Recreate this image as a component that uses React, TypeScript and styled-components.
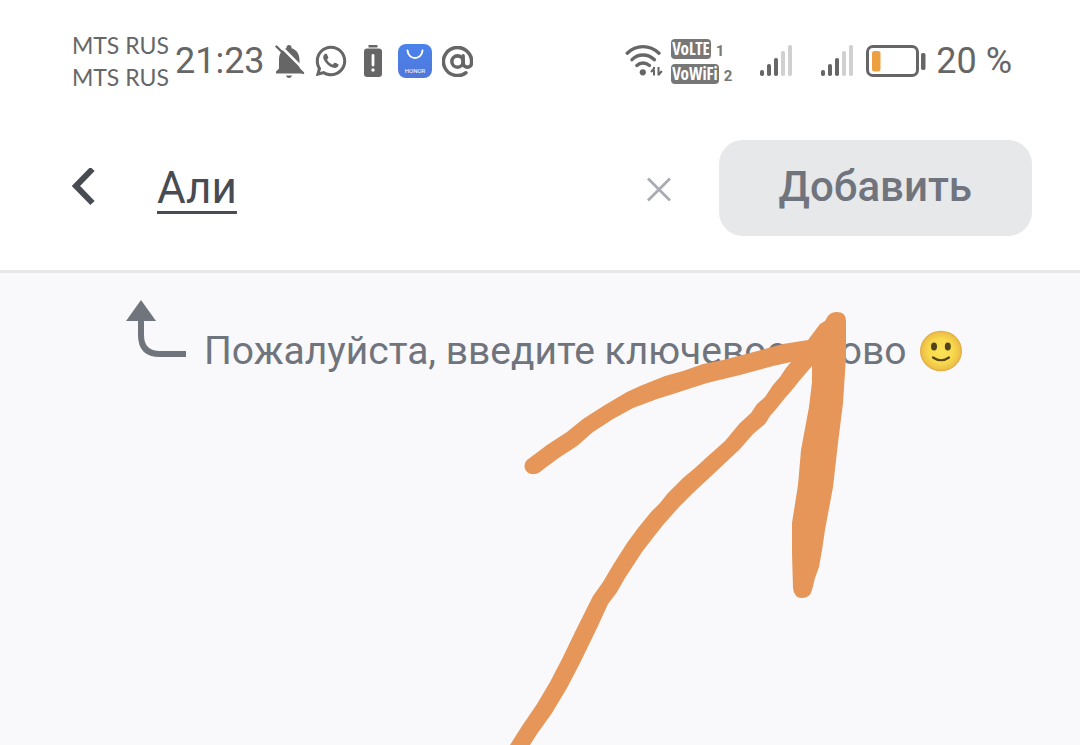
import React, { useState } from "react";
import styled, { createGlobalStyle } from "styled-components";
import { RiWhatsappLine } from "react-icons/ri";
import { AtSign } from "lucide-react";

const GlobalStyle = createGlobalStyle`
  *, *::before, *::after { box-sizing: border-box; }
  body {
    margin: 0;
    background: #f9f9fb;
    font-family: Roboto, "Noto Sans", sans-serif;
  }
`;

const Page = styled.div`
  min-height: 100vh;
  display: flex;
  flex-direction: column;
`;

const Header = styled.header`
  background: #ffffff;
  border-bottom: 3px solid #e6e7e9;
`;

const StatusBar = styled.div`
  display: flex;
  justify-content: space-between;
  align-items: center;
  height: 122px;
  padding: 0 68px 0 72px;
  color: #666666;
`;

const StatusGroup = styled.div<{ $gap: number }>`
  display: flex;
  align-items: center;
  gap: ${(p) => p.$gap}px;

  svg { display: block; flex: none; }
`;

const Carriers = styled.div`
  font: 400 23px/32px Lato, sans-serif;
  white-space: nowrap;
`;

const StatusText = styled.span`
  font-size: 36px;
  line-height: 40px;
  white-space: nowrap;
`;

const CallModes = styled.div`
  display: flex;
  flex-direction: column;
  gap: 5px;
`;

const CallMode = styled.div`
  display: flex;
  align-items: flex-end;
  gap: 5px;
  color: #777777;
  font: 700 15px/16px Roboto, sans-serif;
`;

const Badge = styled.span`
  padding: 0 1px;
  border-radius: 4px;
  background: #777777;
  color: #ffffff;
  font: 700 17px/20px "Liberation Sans Narrow", "Open Sans Condensed", sans-serif;
`;

const Toolbar = styled.form`
  display: flex;
  align-items: center;
  padding: 18px 48px 34px 72px;
`;

const IconButton = styled.button`
  display: flex;
  flex: none;
  padding: 0;
  border: 0;
  background: none;
  cursor: pointer;
`;

const KeywordInput = styled.input`
  flex: 1;
  min-width: 0;
  height: 64px;
  margin: 0 24px 0 61px;
  padding: 0;
  border: 0;
  outline: 0;
  background: transparent;
  color: #484b51;
  font: 400 44px/64px Roboto, "Noto Sans", sans-serif;
  text-decoration: underline;
  text-decoration-thickness: 3px;
  text-underline-offset: 8px;
  text-decoration-skip-ink: none;
`;

const AddButton = styled.button`
  flex: none;
  height: 96px;
  margin-left: 48px;
  padding: 0 60px 2px;
  border: 0;
  border-radius: 24px;
  background: #e7e8ea;
  color: #70747c;
  font: 500 42px/48px Roboto, "Noto Sans", sans-serif;
  cursor: pointer;
`;

const Content = styled.main`
  position: relative;
  flex: 1;
  overflow: hidden;
  padding: 27px 48px 27px 126px;
`;

const Hint = styled.div`
  display: flex;
  align-items: flex-start;
  gap: 18px;

  svg { flex: none; }
`;

const HintText = styled.p`
  display: flex;
  align-items: center;
  gap: 12px;
  margin: 0;
  padding-top: 21px;
  color: #70747c;
  font-size: 39px;
  line-height: 60px;
  white-space: nowrap;
`;

const Scribble = styled.svg`
  position: absolute;
  top: 27px;
  left: 500px;
  pointer-events: none;
`;

const BellOff = () => (
  <svg width="30" height="34" viewBox="274 44 30 34" aria-hidden="true">
    <path
      d="M275 73.500V71.500L278 68.500V60C278 53.500 281 49.500 285.500 48.300V47.500Q285.500 45 288 45Q290.500 45 290.500 47.500V48.300C295 49.500 298.500 53.500 298.500 60V68.500L301 71.500V73.500Z"
      fill="#666"
    />
    <path d="M285 75.500h6q-.6 2.500-3 2.500t-3-2.500z" fill="#666" />
    <path d="M277.500 44L304 70.500" stroke="#fff" strokeWidth="2.600" />
    <path d="M275.500 46.500L302 73" stroke="#666" strokeWidth="2.400" strokeLinecap="round" />
  </svg>
);

const BatteryAlert = () => (
  <svg width="31" height="34" viewBox="356 44 31 34" aria-hidden="true">
    <rect x="367.500" y="45" width="9" height="2.600" rx=".6" fill="#666" />
    <rect x="363" y="48.500" width="18" height="28.500" rx="3.200" fill="#666" />
    <path d="M372 55.500v9.500" stroke="#fff" strokeWidth="2.800" strokeLinecap="round" />
    <circle cx="372" cy="70" r="1.700" fill="#fff" />
  </svg>
);

const HonorStore = () => (
  <svg width="34" height="34" viewBox="0 0 34 34" aria-hidden="true">
    <defs>
      <linearGradient id="store" x1="0" y1="0" x2="0" y2="1">
        <stop offset="0" stopColor="#4a83ea" />
        <stop offset="1" stopColor="#5077dc" />
      </linearGradient>
    </defs>
    <rect width="34" height="34" rx="8" fill="url(#store)" />
    <path d="M9.500 6.500C10.500 16.500 23.500 16.500 24.500 6.500" fill="none" stroke="#fff" strokeWidth="2" strokeLinecap="round" />
    <text x="17" y="28.500" fill="#fff" fontFamily="Roboto" fontWeight="400" fontSize="6" textAnchor="middle">
      HONOR
    </text>
  </svg>
);

const Wifi = () => (
  <svg width="38" height="34" viewBox="626 44 38 34" aria-hidden="true">
    <g fill="none" stroke="#666" strokeWidth="3.300" strokeLinecap="round">
      <path d="M628.200 53.200Q635 46.700 644 46.700T660 53.200" />
      <path d="M633 59.700Q637.500 55 644 55T655.500 59.700" />
      <path d="M637.800 65.500Q640.500 63 644 63T650.500 65.500" />
    </g>
    <circle cx="643.800" cy="72.300" r="3.100" fill="#666" />
    <path d="M655 67V75.500M652 72L655.500 68M659.500 67V75.500M659.500 75L662.800 71" fill="none" stroke="#666" strokeWidth="2" />
  </svg>
);

const BARS = [6, 12, 18, 25, 31];

const Signal = () => (
  <svg width="34" height="32" viewBox="0 0 34 32" role="img" aria-label="Сигнал">
    {BARS.map((h, i) => (
      <rect key={h} x={i * 7 + 1} y={31 - h} width="4" height={h} rx="1.800" fill={i < 3 ? "#666" : "#d0d0d0"} />
    ))}
  </svg>
);

const Battery = () => (
  <svg width="60" height="32" viewBox="0 0 60 32" aria-hidden="true">
    <rect x="1.500" y="1.500" width="50" height="29" rx="5.500" fill="none" stroke="#666" strokeWidth="3" />
    <rect x="6" y="6" width="8.500" height="20.500" rx="2.500" fill="#eda03f" />
    <rect x="55" y="8" width="4.500" height="17" rx="1.800" fill="#666" />
  </svg>
);

const Smile = () => (
  <svg width="44" height="44" viewBox="-22 -22 44 44" role="img" aria-label="Улыбка">
    <defs>
      <radialGradient id="face">
        <stop offset="0" stopColor="#fbe355" />
        <stop offset=".6" stopColor="#f8d94d" />
        <stop offset=".9" stopColor="#eec148" />
        <stop offset="1" stopColor="#dda63f" />
      </radialGradient>
    </defs>
    <ellipse rx="21" ry="20.300" fill="url(#face)" />
    <ellipse cx="-7" cy="-4.500" rx="3" ry="3.900" fill="#53421a" />
    <ellipse cx="6.800" cy="-4.500" rx="3" ry="3.900" fill="#53421a" />
    <path d="M-8 6.500Q0 12 8 6.500" fill="none" stroke="#53421a" strokeWidth="2.200" strokeLinecap="round" />
  </svg>
);

const ARROW =
  "M527 460L547 445L567 432L583 419Q604 405 627 392L640 386L665 376L683 371L703 364L723 360L750 353L783 344L808 340L820 324L825 321L828 316Q831 312 837 312Q846 312 846 321V357L843 403L838 443L833 487L825 530L822 550L819 567L815 578L812 590Q810 598 802 598Q794 598 793 588L792 553V523L798 485L801 450L809 407L812 382V366L800 380L792 390L785 398L777 408L770 416L765 424L753 434L740 449L723 465L708 479L693 493L679 507L663 525L652 539L642 552L625 578L617 592L608 604L597 628L580 663L567 688L552 713L537 734L530 745H510L522 726L537 704L550 682L563 657L575 632L593 596L603 582L613 565L627 543L638 528L651 512L660 503L668 493L683 478L695 468L707 457L725 441L740 423L751 413L757 404L765 397L773 385L780 377L786 368L791 362L773 366L740 375L707 383L673 394L657 399L633 408L613 419L593 432L577 446L560 457L545 468L540 472C529 479 520 468 527 460Z";

export default function App() {
  const [keyword, setKeyword] = useState("Али");

  return (
    <Page>
      <GlobalStyle />
      <Header>
        <StatusBar>
          <StatusGroup $gap={6}>
            <Carriers>
              <div>MTS RUS</div>
              <div>MTS RUS</div>
            </Carriers>
            <StatusGroup $gap={10}>
              <StatusText>21:23</StatusText>
              <BellOff />
              <RiWhatsappLine size={32} viewBox="1.5 1.5 21 21" />
              <BatteryAlert />
              <HonorStore />
              <AtSign size={31} viewBox="1 1 22 22" strokeWidth={2.5} />
            </StatusGroup>
          </StatusGroup>
          <StatusGroup $gap={27}>
            <StatusGroup $gap={8}>
              <Wifi />
              <CallModes>
                <CallMode>
                  <Badge>VoLTE</Badge>1
                </CallMode>
                <CallMode>
                  <Badge>VoWiFi</Badge>2
                </CallMode>
              </CallModes>
            </StatusGroup>
            <Signal />
            <StatusGroup $gap={12}>
              <Signal />
              <StatusGroup $gap={10}>
                <Battery />
                <StatusText>20 %</StatusText>
              </StatusGroup>
            </StatusGroup>
          </StatusGroup>
        </StatusBar>
        <Toolbar onSubmit={(e) => e.preventDefault()}>
          <IconButton type="button" aria-label="Назад">
            <svg width="24" height="40" viewBox="72 168 24 40" aria-hidden="true">
              <path d="M92.500 169L76 186L92.500 203" fill="none" stroke="#484b51" strokeWidth="6" />
            </svg>
          </IconButton>
          <KeywordInput
            aria-label="Ключевое слово"
            value={keyword}
            onChange={(e) => setKeyword(e.target.value)}
          />
          <IconButton type="button" aria-label="Очистить" onClick={() => setKeyword("")}>
            <svg width="24" height="26" viewBox="0 0 24 26" aria-hidden="true">
              <path d="M1 3.500L23 25.500M23 3.500L1 25.500" stroke="#a9acb3" strokeWidth="2.800" />
            </svg>
          </IconButton>
          <AddButton type="submit">Добавить</AddButton>
        </Toolbar>
      </Header>
      <Content>
        <Hint>
          <svg width="60" height="57" viewBox="0 0 60 57" aria-hidden="true">
            <path d="M15 0L30 21H0Z" fill="#70747c" />
            <path d="M15 20V35Q15 54 34 54H60" fill="none" stroke="#70747c" strokeWidth="6" />
          </svg>
          <HintText>
            Пожалуйста, введите ключевое слово
            <Smile />
          </HintText>
        </Hint>
        <Scribble width="350" height="445" viewBox="500 300 350 445" aria-hidden="true">
          <path d={ARROW} fill="#e59658" />
        </Scribble>
      </Content>
    </Page>
  );
}
